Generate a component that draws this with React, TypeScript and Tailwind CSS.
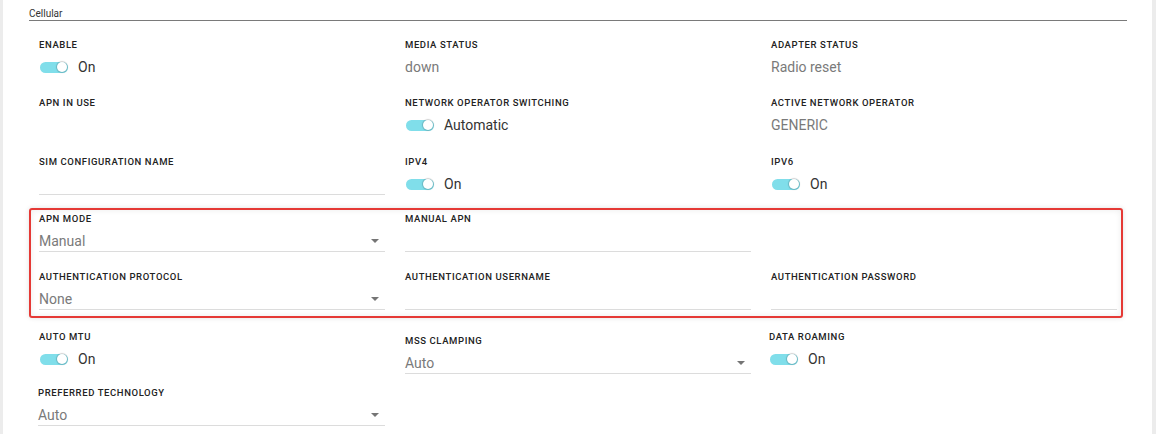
import React from "react";

const Label = ({ children }: { children: React.ReactNode }) => (
  <div className="h-[16px] leading-[16px] text-[9.5px] font-medium tracking-[0.6px] uppercase text-[#222] whitespace-nowrap">
    {children}
  </div>
);

const Text = ({ label, value }: { label: string; value?: string }) => (
  <div>
    <Label>{label}</Label>
    <div className="mt-[4px] h-[20px] leading-[20px] text-[14px] text-[#7a7a7a]">{value}</div>
  </div>
);

const Toggle = ({ label, value }: { label: string; value: string }) => (
  <div>
    <Label>{label}</Label>
    <div className="mt-[4px] h-[20px] flex items-center gap-[10px]">
      <div className="relative ml-[1px] w-[28px] h-[11px] rounded-full bg-[#80deea]">
        <div className="absolute right-[1px] top-[0.5px] w-[10px] h-[10px] rounded-full bg-white shadow-[0_0_1px_1px_rgba(0,0,0,0.18)]" />
      </div>
      <span className="text-[14px] leading-[20px] text-[#333]">{value}</span>
    </div>
  </div>
);

const Input = ({ label, value }: { label: string; value?: string }) => (
  <div>
    <Label>{label}</Label>
    <div className="mt-[4px] h-[21px] leading-[20px] text-[14px] text-[#7a7a7a] border-b border-[#dcdcdc]">{value}</div>
  </div>
);

const Select = ({ label, value }: { label: string; value: string }) => (
  <div>
    <Label>{label}</Label>
    <div className="mt-[4px] h-[21px] flex items-center justify-between text-[14px] leading-[20px] text-[#7a7a7a] border-b border-[#dcdcdc]">
      <span>{value}</span>
      <svg width="8" height="4" viewBox="0 0 8 4" className="mr-[6px]">
        <path d="M0 0H8L4 4Z" fill="#757575" />
      </svg>
    </div>
  </div>
);

export default function App() {
  return (
    <div className="min-h-[434px] bg-[#ececec] pl-[3px] pr-[4px] font-['Roboto',sans-serif]">
      <div className="min-h-[434px] bg-white pl-[26px] pr-[25px]">
        <div className="pt-[8px] pb-0 border-b border-[#7a7a7a] text-[10px] leading-[12px] text-[#333]">
          Cellular
        </div>
        <div className="px-[10px] mt-[16px]">
          <div className="grid grid-cols-3 gap-x-[20px] h-[58px]">
            <Toggle label="Enable" value="On" />
            <Text label="Media Status" value="down" />
            <Text label="Adapter Status" value="Radio reset" />
          </div>
          <div className="grid grid-cols-3 gap-x-[20px] h-[59px]">
            <Text label="APN in use" />
            <Toggle label="Network Operator Switching" value="Automatic" />
            <Text label="Active Network Operator" value="GENERIC" />
          </div>
          <div className="grid grid-cols-3 gap-x-[20px] h-[54px]">
            <Input label="SIM Configuration Name" />
            <Toggle label="IPv4" value="On" />
            <Toggle label="IPv6" value="On" />
          </div>
        </div>
        <div className="mr-[4px] pl-[8px] pr-[4px] pt-[1px] border-2 border-[#e53935] rounded-[3px] shadow-[0_0_5px_rgba(0,0,0,0.12),inset_0_0_6px_rgba(0,0,0,0.08)]">
          <div className="grid grid-cols-3 gap-x-[20px] h-[58px]">
            <Select label="APN Mode" value="Manual" />
            <Input label="Manual APN" />
            <div />
          </div>
          <div className="grid grid-cols-3 gap-x-[20px] h-[47px]">
            <Select label="Authentication Protocol" value="None" />
            <Input label="Authentication Username" />
            <Input label="Authentication Password" />
          </div>
        </div>
        <div className="px-[10px] mt-[11px]">
          <div className="grid grid-cols-3 gap-x-[20px] h-[56px]">
            <Toggle label="Auto MTU" value="On" />
            <div className="pt-[4px]">
              <Select label="MSS Clamping" value="Auto" />
            </div>
            <div className="ml-[-2px]">
              <Toggle label="Data Roaming" value="On" />
            </div>
          </div>
          <div className="grid grid-cols-3 gap-x-[20px] h-[56px]">
            <div className="ml-[-1px]">
              <Select label="Preferred Technology" value="Auto" />
            </div>
            <div />
            <div />
          </div>
        </div>
      </div>
    </div>
  );
}
